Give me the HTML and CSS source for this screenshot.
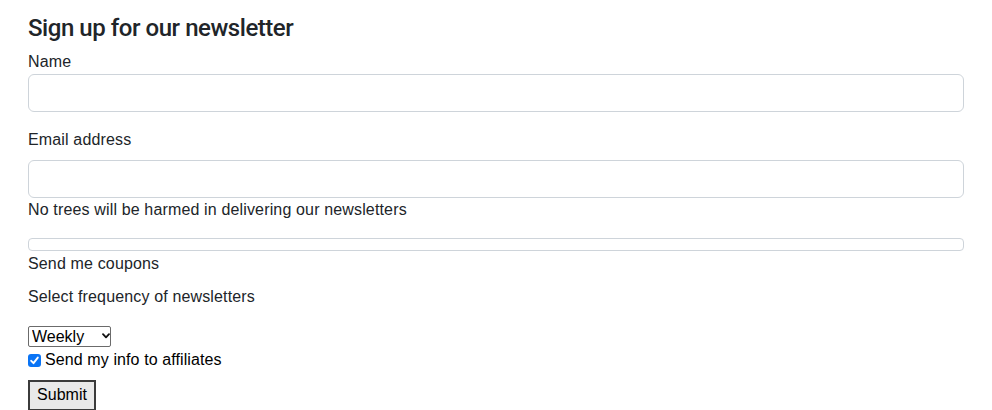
FILE: index.html
```html
<!DOCTYPE html>
<html lang="en">
<head>
<meta charset="utf-8">
<title>Sign up for our newsletter</title>
<link rel="stylesheet" href="styles.css">
</head>
<body>
<form class="signup">
  <h4 class="title">Sign up for our newsletter</h4>
  <div class="group">
    <label class="label" for="name">Name</label>
    <input class="control" id="name" type="text">
  </div>
  <div class="group">
    <label class="label label-spaced" for="email">Email address</label>
    <input class="control" id="email" type="email">
    <div class="help">No trees will be harmed in delivering our newsletters</div>
  </div>
  <div class="thin-control"></div>
  <div class="label">Send me coupons</div>
  <div class="label freq-label">Select frequency of newsletters</div>
  <div class="select-wrap">
    <select class="select">
      <option>Weekly</option>
      <option>Monthly</option>
    </select>
    <svg class="chevron" width="8" height="6" viewBox="0 0 8 6" aria-hidden="true"><path d="M1 1.2 L4 4.4 L7 1.2" fill="none" stroke="#111" stroke-width="1.8" stroke-linecap="round" stroke-linejoin="round"/></svg>
  </div>
  <label class="check-row">
    <span class="checkbox"><svg width="13" height="13" viewBox="0 0 13 13" aria-hidden="true"><path d="M3.2 6.8 L5.5 9.2 L9.8 3.6" fill="none" stroke="#fff" stroke-width="1.9" stroke-linecap="round" stroke-linejoin="round"/></svg></span>
    <span class="check-text">Send my info to affiliates</span>
  </label>
  <button class="submit" type="button">Submit</button>
</form>
</body>
</html>
```

FILE: styles.css
```css
html, body {
  margin: 0;
  padding: 0;
  background: #fff;
}

body {
  color: #212529;
  font-family: "Liberation Sans", Arial, sans-serif;
  font-size: 16px;
  line-height: 24px;
}

.signup {
  padding: 14px 28px 0 28px;
  display: flex;
  flex-direction: column;
  align-items: stretch;
}

.title {
  margin: 0 0 7px 0;
  font-family: Roboto, "Liberation Sans", Arial, sans-serif;
  font-size: 24px;
  line-height: 28.8px;
  font-weight: 500;
  letter-spacing: -0.45px;
}

.group {
  margin-bottom: 16px;
  display: flex;
  flex-direction: column;
}

.label {
  display: block;
  letter-spacing: 0.15px;
}

.label-spaced {
  margin-bottom: 8px;
}

.control {
  box-sizing: border-box;
  height: 38px;
  width: 100%;
  margin: 0;
  border: 1px solid #ced4da;
  border-radius: 6px;
  padding: 6px 12px;
  font: inherit;
  background: #fff;
}

.help {
  letter-spacing: 0.15px;
}

.thin-control {
  box-sizing: border-box;
  height: 13px;
  margin-bottom: 1px;
  border: 1px solid #ced4da;
  border-radius: 4px;
  background: #fff;
}

.freq-label {
  margin-top: 9px;
}

.select-wrap {
  position: relative;
  align-self: flex-start;
  margin-top: 16px;
  width: 83px;
  height: 21px;
}

.select {
  -webkit-appearance: none;
  appearance: none;
  box-sizing: border-box;
  width: 83px;
  height: 21px;
  margin: 0;
  border: 1px solid #6b6b6b;
  border-radius: 2px;
  background: #fff;
  color: #000;
  font-family: "Liberation Sans", Arial, sans-serif;
  font-size: 16px;
  line-height: 19px;
  padding: 0 0 0 3px;
}

.chevron {
  position: absolute;
  left: 74px;
  top: 8px;
  pointer-events: none;
}

.check-row {
  display: flex;
  align-items: center;
  gap: 4px;
  margin-top: 4px;
  height: 20px;
  color: #000;
}

.checkbox {
  width: 13px;
  height: 13px;
  border-radius: 3px;
  background: #0a74f5;
  display: flex;
  flex: none;
  margin-top: 1px;
}

.check-text {
  letter-spacing: 0.1px;
  line-height: 20px;
}

.submit {
  align-self: flex-start;
  margin-top: 10px;
  box-sizing: border-box;
  width: 68px;
  height: 31px;
  border: 2px solid #3b3b3b;
  border-radius: 0;
  background: #e9e9e9;
  color: #000;
  font-family: "Liberation Sans", Arial, sans-serif;
  font-size: 16px;
  padding: 0;
}
```
